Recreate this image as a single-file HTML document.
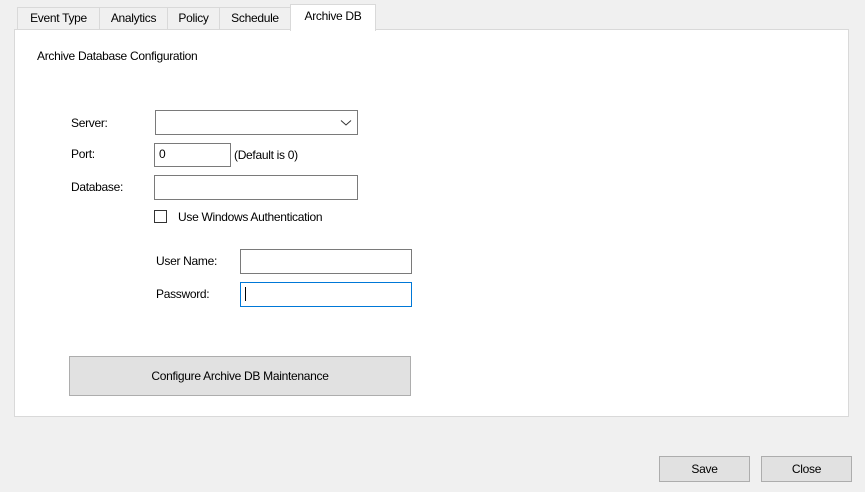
<!DOCTYPE html><html><head><style>
body{margin:0;width:865px;height:492px;background:#f0f0f0;font-family:"Liberation Sans",sans-serif;font-size:12px;color:#000;position:relative;overflow:hidden}
.a{position:absolute}
.tab{position:absolute;top:7px;height:22px;border:1px solid #d9d9d9;border-bottom:none;background:#f0f0f0;box-sizing:border-box;text-align:center;line-height:21px;letter-spacing:-0.3px}
.in{position:absolute;background:#fff;border:1px solid #7a7a7a;box-sizing:border-box}
.btn{position:absolute;background:#e1e1e1;border:1px solid #adadad;box-sizing:border-box;text-align:center;letter-spacing:-0.3px}
.l{position:absolute;letter-spacing:-0.3px}
</style></head><body>
<div class="a" style="left:14px;top:29px;width:835px;height:388px;background:#fff;border:1px solid #d9d9d9;box-sizing:border-box"></div>
<div class="tab" style="left:17px;width:83px">Event Type</div>
<div class="tab" style="left:99px;width:69px">Analytics</div>
<div class="tab" style="left:167px;width:53px">Policy</div>
<div class="tab" style="left:219px;width:72px">Schedule</div>
<div class="tab" style="left:290px;top:4px;height:27px;width:86px;background:#fff;line-height:22px">Archive DB</div>
<div class="l" style="left:37px;top:49px">Archive Database Configuration</div>
<div class="l" style="left:71px;top:116px">Server:</div>
<div class="in" style="left:155px;top:110px;width:203px;height:25px"></div>
<svg class="a" style="left:340px;top:119px" width="12" height="8"><path d="M1 1.5L6 6L11 1.5" stroke="#333" fill="none"/></svg>
<div class="l" style="left:71px;top:147px">Port:</div>
<div class="in" style="left:154px;top:143px;width:77px;height:24px;padding:3px 0 0 4px">0</div>
<div class="l" style="left:234px;top:148px">(Default is 0)</div>
<div class="l" style="left:71px;top:180px">Database:</div>
<div class="in" style="left:154px;top:175px;width:204px;height:25px"></div>
<div class="a" style="left:154px;top:210px;width:13px;height:13px;border:1px solid #333;box-sizing:border-box;background:#fff"></div>
<div class="l" style="left:178px;top:210px">Use Windows Authentication</div>
<div class="l" style="left:156px;top:254px">User Name:</div>
<div class="in" style="left:240px;top:249px;width:172px;height:25px"></div>
<div class="l" style="left:156px;top:287px">Password:</div>
<div class="in" style="left:240px;top:282px;width:172px;height:25px;border-color:#0078d7"></div>
<div class="a" style="left:245px;top:287px;width:1px;height:14px;background:#000"></div>
<div class="btn" style="left:69px;top:356px;width:342px;height:40px;line-height:38px">Configure Archive DB Maintenance</div>
<div class="btn" style="left:659px;top:456px;width:91px;height:26px;line-height:24px">Save</div>
<div class="btn" style="left:761px;top:456px;width:91px;height:26px;line-height:24px">Close</div>
</body></html>
